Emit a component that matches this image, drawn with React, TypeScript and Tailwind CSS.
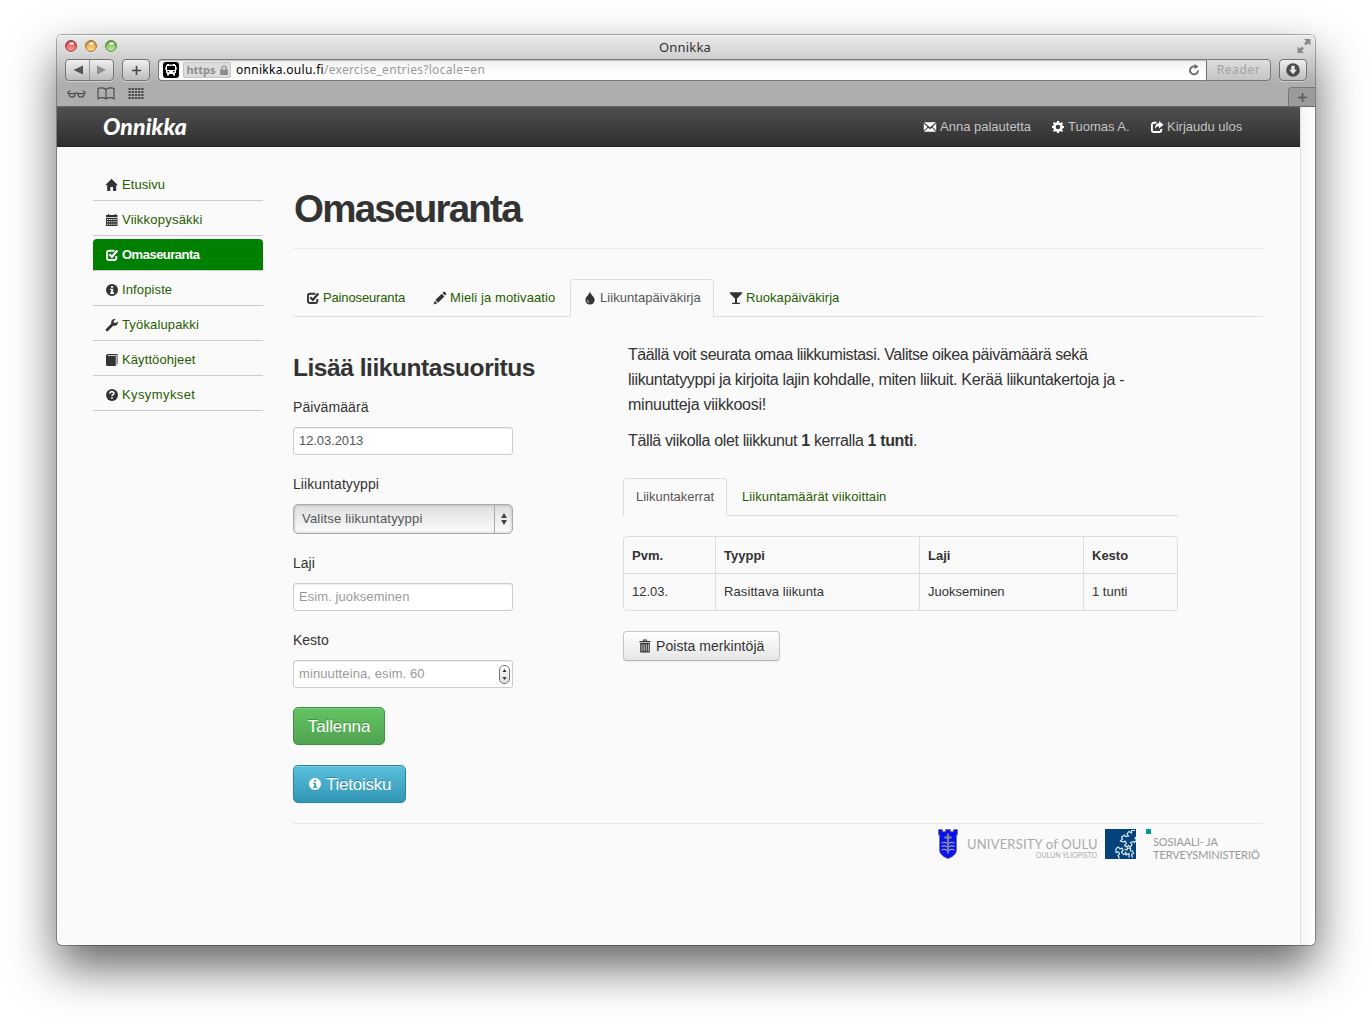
import type { ReactNode } from "react";

type IconName =
  | "home" | "calendar" | "check" | "info" | "wrench" | "book" | "question"
  | "pencil" | "tint" | "glass" | "envelope" | "cog" | "share" | "trash";

const glyphs: Record<IconName, ReactNode> = {
  home: <path d="M6.500 .8 13 7.200H11.200V13H8V9H5.300V13H2.200V7.200H.2Z" />,
  calendar: (
    <path
      fillRule="evenodd"
      d="M1 2h2V1h1.2v1h5.600V1H11v1h1.500v2H1zM1 4.800h11.500V13H1zM2 6v1h1.200V6zm2.100 0v1h1.200V6zm2.100 0v1h1.200V6zm2.100 0v1h1.200V6zm2.100 0v1h1.200V6zM2 8.300v1h1.200v-1zm2.100 0v1h1.200v-1zm2.100 0v1h1.200v-1zm2.100 0v1h1.200v-1zm2.100 0v1h1.200v-1zM2 10.700v1h1.200v-1zm2.100 0v1h1.200v-1zm2.100 0v1h1.200v-1zm2.100 0v1h1.200v-1zm2.100 0v1h1.200v-1z"
    />
  ),
  check: (
    <>
      <path d="M9.500 2.800H4A2.100 2.100 0 0 0 2 4.900v5a2.100 2.100 0 0 0 2 2.100h5.200a2.100 2.100 0 0 0 2.100-2.100V8" fill="none" stroke="currentColor" strokeWidth="1.900" />
      <path d="M4.300 6.200 6.900 8.800 12.400 2.600" fill="none" stroke="currentColor" strokeWidth="2.200" />
    </>
  ),
  info: <path fillRule="evenodd" d="M7 1a6 6 0 1 0 0 12A6 6 0 0 0 7 1zm-1 2h2.200v1.800H6zM5 5.700h3.200v3.800h1V11H5V9.500h1V7H5z" />,
  wrench: <path d="M12.900 3.400 10.600 5 8.800 4.600 8.600 3 10.600 1.200C8.600.5 6.400 1.700 6.200 3.900c-.1.700 0 1.200.2 1.700L1.200 10.800c-.7.800-.5 1.700 0 2.100.5.500 1.400.6 2-.1l5.200-5.200c2.500.8 5-1.300 4.500-4.200z" />,
  book: <path fillRule="evenodd" d="M3 1h9.500v10.500h-.9V2.100H2.900v.7H10.800V13H2.200C1.500 13 1 12.500 1 11.800V3c0-1.200.8-2 2-2z" />,
  question: (
    <>
      <circle cx="7" cy="7" r="6" />
      <path d="M4.900 5.500C4.900 3 9 3.100 9 5.300 9 6.700 7 6.600 7 8.100M7 9.100v1.700" fill="none" stroke="#fafafa" strokeWidth="1.600" />
    </>
  ),
  pencil: <path d="M.6 13.400 1.800 9.700 4.400 12.200zM2.400 9 8.700 2.700l2.700 2.700-6.300 6.300zM9.500 1.900l.9-.9c.9-.9 3.600 1.700 2.700 2.600l-1 1z" />,
  tint: <path fillRule="evenodd" d="M7 .4C7.600 3.400 11.600 5.800 11.600 8.900A4.600 4.600 0 0 1 2.400 8.900C2.400 5.800 6.400 3.400 7 .4zM5 8.200c-1.400 1.600-.2 3.400 1.300 3.300C5.200 10.600 4.900 9.600 5 8.200z" />,
  glass: <path d="M.8 1.200h12.400v1L8 7.700v4.100h3V13H3v-1.200h3V7.700L.8 2.200z" />,
  envelope: <path d="M1 2.300h12L7 7.300zM.8 3.400 4.500 7 .8 10.800zM13.200 3.400 9.500 7l3.700 3.800zM5.200 7.700 7 9.200l1.800-1.500 4.200 4.100H1z" />,
  cog: (
    <path
      fillRule="evenodd"
      d="M6 1h2l.3 1.500 1.100.5 1.300-.9 1.300 1.300-.9 1.300.5 1.100L13 6v2l-1.400.3-.5 1.100.9 1.300-1.300 1.300-1.300-.9-1.100.5L8 13H6l-.3-1.400-1.100-.5-1.300.9L2 10.700l.9-1.300-.5-1.100L1 8V6l1.400-.3.5-1.100L2 3.300 3.300 2l1.300.9 1.100-.5zM7 4.700a2.300 2.300 0 1 0 0 4.600 2.300 2.300 0 0 0 0-4.600z"
    />
  ),
  share: (
    <>
      <path d="M6.500 2.800H4A2.100 2.100 0 0 0 1.900 4.900v5A2.100 2.100 0 0 0 4 12h5.200a2.100 2.100 0 0 0 2.100-2.100V9" fill="none" stroke="currentColor" strokeWidth="1.900" />
      <path d="M9 1l4.500 3.700L9 8.400V6.200C6.800 6.200 6 7 5.200 8.800 4.800 5.200 6.500 3.300 9 3.200z" />
    </>
  ),
  trash: (
    <path
      fillRule="evenodd"
      d="M5 .5h4V2h3.500v1.300h-11V2H5zM6 1.400V2h2v-.6zM2.200 4h9.600v9.500H2.200zM3.600 5.200v7h.8v-7zm2.100 0v7h.8v-7zm2.100 0v7h.8v-7zm2.100 0v7h.8v-7z"
    />
  ),
};

function Icon({ name, className = "" }: { name: IconName; className?: string }) {
  return (
    <svg viewBox="0 0 14 14" fill="currentColor" className={`h-[14px] w-[14px] shrink-0 ${className}`}>
      {glyphs[name]}
    </svg>
  );
}

const sideItems: { icon: IconName; label: string; track: string; active?: boolean }[] = [
  { icon: "home", label: "Etusivu", track: "tracking-[0.050px]" },
  { icon: "calendar", label: "Viikkopysäkki", track: "tracking-[0.220px]" },
  { icon: "check", label: "Omaseuranta", track: "tracking-[-0.500px]", active: true },
  { icon: "info", label: "Infopiste", track: "tracking-[0.120px]" },
  { icon: "wrench", label: "Työkalupakki", track: "tracking-[0.150px]" },
  { icon: "book", label: "Käyttöohjeet", track: "tracking-[0.100px]" },
  { icon: "question", label: "Kysymykset", track: "tracking-[0.400px]" },
];

const mainTabs: { icon: IconName; label: string; box: string; active?: boolean }[] = [
  { icon: "check", label: "Painoseuranta", box: "w-[127px] tracking-[-0.140px]" },
  { icon: "pencil", label: "Mieli ja motivaatio", box: "w-[150px] tracking-[0.110px]" },
  { icon: "tint", label: "Liikuntapäiväkirja", box: "w-[144px] tracking-[0.060px]", active: true },
  { icon: "glass", label: "Ruokapäiväkirja", box: "w-[140px] ml-[2px] tracking-[0.060px]" },
];

function Light({ tone }: { tone: string }) {
  return (
    <span className={`relative block h-3 w-3 rounded-full border shadow-[inset_0_1px_2px_rgba(0,0,0,0.35),0_1px_0_rgba(255,255,255,0.5)] ${tone}`}>
      <span className="absolute left-[2.500px] top-[0.500px] h-[3px] w-[5px] rounded-full bg-white/70" />
    </span>
  );
}

const chromeButton =
  "flex h-[22px] items-center justify-center rounded-[4px] border border-[#747474] bg-linear-to-b from-[#efefef] to-[#bdbdbd] shadow-[0_1px_0_rgba(255,255,255,0.4)]";

function BrowserChrome() {
  return (
    <div className="h-[72px] rounded-t-[5px] border-b border-[#6b6b6b] bg-linear-to-b from-[#ebebeb] from-0% via-[#cfcfcf] via-33% to-[#aeaeae] to-68% font-['Noto_Sans',sans-serif] shadow-[inset_0_1px_0_#f5f5f5]">
      <div className="grid h-6 grid-cols-[1fr_auto_1fr] items-center px-2">
        <div className="mt-[-2px] flex gap-2">
          <Light tone="border-[#a33a3c] bg-linear-to-b from-[#d8484b] to-[#ff9a97]" />
          <Light tone="border-[#a97430] bg-linear-to-b from-[#e39a3c] to-[#ffe08a]" />
          <Light tone="border-[#5a8a42] bg-linear-to-b from-[#6fb04e] to-[#c5ee9c]" />
        </div>
        <div className="ml-[-2px] text-[13px] leading-5 tracking-[0.200px] text-[#333]">Onnikka</div>
        <svg viewBox="0 0 14 14" className="mr-[-4px] mt-[-2px] h-[14px] w-[14px] justify-self-end" fill="#888">
          <path d="M13.500 0v6.500L11.300 4.300 9 6.600 7 4.600l2.300-2.300L7 0zM.5 14V7.500l2.200 2.200L5 7.400l2 2-2.300 2.300L7 14z" />
        </svg>
      </div>
      <div className="flex h-[22px] pl-2 pr-[8px]">
        <div className={`${chromeButton} w-[49px]`}>
          <svg viewBox="0 0 47 20" className="h-5 w-[47px]">
            <path d="M17 5.500v9L7.500 10z" fill="#555" />
            <path d="M31 5.500v9l9-4.500z" fill="#8f8f8f" />
            <path d="M23.500 0v20" stroke="#999" />
          </svg>
        </div>
        <div className={`${chromeButton} ml-2 w-7`}>
          <svg viewBox="0 0 12 12" className="h-[11px] w-[11px]" stroke="#444" strokeWidth="1.800">
            <path d="M6 1v10M1 6h10" />
          </svg>
        </div>
        <div className="ml-2 flex h-[22px] flex-1 items-center rounded-l-[4px] border border-r-0 border-[#777] bg-linear-to-b from-[#f0f0f0] to-white to-70% pl-[4px] text-[12px] shadow-[inset_0_1px_1px_rgba(0,0,0,0.2)]">
          <svg viewBox="0 0 16 16" className="h-4 w-4 shrink-0">
            <rect width="16" height="16" rx="3" fill="#000" />
            <path fillRule="evenodd" fill="#fff" d="M4 2h8v1h1v8h-1v2.500h-2V12H6v1.500H4V11H3V3h1zm0 2v4h8V4zm.5 5v1.200h1.500V9zM10 9v1.200h1.500V9zM6 2.600v.6h4v-.6zM2 5h.7v3H2zm11.300 0h.7v3h-.7z" />
          </svg>
          <span className="ml-1 flex h-4 w-[48px] items-center justify-center gap-1 rounded-[2px] border border-[#c4c4c4] bg-[#dcdcdc] text-[11px] font-bold leading-3 text-[#8d8d8d]">
            <span>https</span>
            <svg viewBox="0 0 9 11" className="h-[10px] w-[8px]" fill="#8d8d8d">
              <rect y="5" width="9" height="6" rx="1" />
              <path d="M2 5.500V3.500a2.500 2.500 0 0 1 5 0v2" fill="none" stroke="#8d8d8d" strokeWidth="1.400" />
            </svg>
          </span>
          <span className="ml-[5px] whitespace-nowrap tracking-[0.290px] text-black">
            onnikka.oulu.fi<span className="text-[#999]">/exercise_entries?locale=en</span>
          </span>
          <svg viewBox="0 0 12 12" className="ml-auto mr-[6px] h-3 w-3" fill="none" stroke="#666" strokeWidth="1.900">
            <path d="M10 6.500a4 4 0 1 1-3-4" />
            <path d="M6.500 0 10.500 2.700 6.500 5z" fill="#666" stroke="none" />
          </svg>
        </div>
        <div className="flex h-[22px] w-[65px] items-center justify-center rounded-r-[4px] border border-[#777] bg-linear-to-b from-[#dedede] to-[#c4c4c4] text-[12px] tracking-[0.600px] text-[#a3a3a3]">Reader</div>
        <div className={`${chromeButton} ml-2 w-7`}>
          <svg viewBox="0 0 14 14" className="h-[14px] w-[14px]">
            <circle cx="7" cy="7" r="6.800" fill="#4a4a4a" />
            <path d="M5.300 2.800h3.400v4h2.200L7 11.300 3.100 6.800h2.200z" fill="#e6e6e6" />
          </svg>
        </div>
      </div>
      <div className="flex h-[25px] items-center pl-[10px] text-[#4b4b4b]">
        <svg viewBox="0 0 20 10" className="h-[10px] w-[19px]" fill="none" stroke="currentColor" strokeWidth="1.300">
          <path d="M8.500 4.500c0 5-6.500 5-6.500 0h6.500c0-1 3-1 3 0H18c0 5-6.500 5-6.500 0M2 4.500 .5 3.500 3.500 1.500M18 4.500l1.500-1-3-2" />
        </svg>
        <svg viewBox="0 0 18 13" className="ml-[11px] h-[13px] w-[18px]" fill="none" stroke="currentColor" strokeWidth="1.200">
          <path d="M9 2.500C7 .5 3 .5 1 1.500V11.800c2.500-1.300 6-1.300 8 .2 2-1.500 5.500-1.500 8-.2V1.500C15 .5 11 .5 9 2.500zV12" />
        </svg>
        <svg viewBox="0 0 16 12" className="ml-[13px] h-3 w-4" fill="currentColor">
          {[0, 3, 6, 9].map((y) =>
            [0.500, 3.700, 6.900, 10.100, 13.300].map((x) => <rect key={`${x}-${y}`} x={x} y={y} width="2.300" height="2" />),
          )}
        </svg>
        <div className="ml-auto mt-[6px] flex h-[19px] w-[27px] items-center justify-center rounded-tl-[4px] border-l border-t border-[#777] bg-[#9b9b9b]">
          <svg viewBox="0 0 10 10" className="h-[9px] w-[9px]" stroke="#555" strokeWidth="1.800">
            <path d="M5 0v10M0 5h10" />
          </svg>
        </div>
      </div>
    </div>
  );
}

function SiteNav() {
  return (
    <div className="flex h-10 items-center bg-linear-to-b from-[#505050] to-[#2e2e2e] pl-[46px] text-[13px] text-[#c3c3c3] shadow-[inset_0_-1px_0_#252525]">
      <div className="mt-[-2px] w-[820px] font-['Lato',sans-serif] text-[23px] font-black italic leading-8 tracking-[0.100px] text-white">Onnikka</div>
      <div className="flex w-[128px] items-center gap-[3px] whitespace-nowrap"><Icon name="envelope" className="text-white" />Anna palautetta</div>
      <div className="flex w-[99px] items-center gap-[3px] whitespace-nowrap"><Icon name="cog" className="text-white" />Tuomas A.</div>
      <div className="flex items-center gap-[3px] whitespace-nowrap"><Icon name="share" className="text-white" />Kirjaudu ulos</div>
    </div>
  );
}

function Sidebar() {
  return (
    <ul className="mt-[19px] w-[170px]">
      {sideItems.map((s) => (
        <li key={s.label} className="mt-[3px] h-8 border-b border-[#ccc]">
          <a className={`flex h-[31px] items-center gap-[3px] pl-3 text-[13px] ${s.active ? "rounded-t-[4px] bg-[#008000] font-bold text-white" : "text-[#265c00]"}`}>
            <Icon name={s.icon} className={s.active ? "text-white" : "text-[#333]"} />
            <span className={s.track}>{s.label}</span>
          </a>
        </li>
      ))}
    </ul>
  );
}

const field =
  "flex h-7 w-[220px] items-center rounded-[3px] border border-[#ccc] bg-white px-[5px] text-[13px] shadow-[inset_0_1px_1px_rgba(0,0,0,0.075)]";

function EntryForm() {
  return (
    <div className="flex w-[330px] flex-col items-start pt-[31px] text-[14px] leading-5">
      <h3 className="h-10 whitespace-nowrap text-[24.500px] font-bold leading-10 tracking-[-0.450px]">Lisää liikuntasuoritus</h3>
      <label className="mt-[9px] tracking-[0.080px]">Päivämäärä</label>
      <div className={`${field} mt-[10px] tracking-[-0.080px] text-[#555]`}>12.03.2013</div>
      <label className="mt-[19px] tracking-[0.080px]">Liikuntatyyppi</label>
      <div className="mt-[10px] flex h-[30px] w-[220px] items-center rounded-[5px] border border-[#aaa] bg-linear-to-b from-[#dedede] to-[#fcfcfc] pl-2 text-[13px] tracking-[0.200px] text-[#555] shadow-[inset_0_0_3px_rgba(0,0,0,0.250)]">
        Valitse liikuntatyyppi
        <span className="ml-auto flex h-full w-[18px] items-center justify-center border-l border-[#aaa]">
          <svg viewBox="0 0 6 12" className="h-3 w-[6px]" fill="#444"><path d="M3 0l3 5H0zM3 12 0 7h6z" /></svg>
        </span>
      </div>
      <label className="mt-[19px]">Laji</label>
      <div className={`${field} mt-[10px] tracking-[0.080px] text-[#999]`}>Esim. juokseminen</div>
      <label className="mt-[19px]">Kesto</label>
      <div className={`${field} mt-[10px] pr-[2px] tracking-[0.100px] text-[#999]`}>
        minuutteina, esim. 60
        <span className="ml-auto flex h-[19px] w-[11px] items-center justify-center rounded-[5px] border border-[#777] bg-linear-to-b from-white to-[#ddd]">
          <svg viewBox="0 0 5 11" className="h-[11px] w-[5px]" fill="#333"><path d="M2.500 0 4.500 3h-4zM2.500 11l-2-3h4z" /></svg>
        </span>
      </div>
      <button className="mt-[19px] h-[38px] w-[92px] rounded-[5px] border border-[#3f8f3f] bg-linear-to-b from-[#62c462] to-[#51a351] pt-[2px] text-[17px] tracking-[-0.100px] text-white [text-shadow:0_-1px_0_rgba(0,0,0,0.250)] shadow-[inset_0_1px_0_rgba(255,255,255,0.2),0_1px_2px_rgba(0,0,0,0.05)]">Tallenna</button>
      <button className="mt-5 flex h-[38px] w-[113px] items-center gap-1 rounded-[5px] border border-[#2c85a0] bg-linear-to-b from-[#5bc0de] to-[#2f96b4] pl-[14px] text-[17px] tracking-[-0.250px] text-white [text-shadow:0_-1px_0_rgba(0,0,0,0.250)] shadow-[inset_0_1px_0_rgba(255,255,255,0.2),0_1px_2px_rgba(0,0,0,0.05)]">
        <Icon name="info" /><span className="pt-[2px]">Tietoisku</span>
      </button>
    </div>
  );
}

function Entries() {
  const th = "border-l border-[#ddd] first:border-l-0 pl-2 pt-[2px] text-left font-bold";
  const td = "border-l border-t border-[#ddd] first:border-l-0 pl-2";
  return (
    <div className="w-[555px] pt-[25px] text-[13px]">
      <div className="pl-[5px] text-[16px] leading-[25px]">
        <p className="whitespace-nowrap tracking-[-0.440px]">Täällä voit seurata omaa liikkumistasi. Valitse oikea päivämäärä sekä</p>
        <p className="whitespace-nowrap tracking-[-0.340px]">liikuntatyyppi ja kirjoita lajin kohdalle, miten liikuit. Kerää liikuntakertoja ja -</p>
        <p className="whitespace-nowrap tracking-[-0.250px]">minuutteja viikkoosi!</p>
        <p className="mt-[11px] whitespace-nowrap tracking-[-0.360px]">Tällä viikolla olet liikkunut <b>1</b> kerralla <b>1 tunti</b>.</p>
      </div>
      <div className="mt-[25px] flex h-[38px] border-b border-[#ddd]">
        <span className="mb-[-1px] flex w-[104px] items-center justify-center whitespace-nowrap rounded-t-[4px] border border-b-0 border-[#ddd] bg-[#fafafa] pb-[2px] text-[#555]">Liikuntakerrat</span>
        <span className="flex items-center whitespace-nowrap pl-[15px] tracking-[0.080px] text-[#265c00]">Liikuntamäärät viikoittain</span>
      </div>
      <div className="mt-5 overflow-hidden rounded-[4px] border border-[#ddd]">
        <table className="w-full table-fixed border-separate border-spacing-0">
          <colgroup>
            <col className="w-[91px]" /><col className="w-[204px]" /><col className="w-[164px]" /><col />
          </colgroup>
          <thead>
            <tr className="h-9"><th className={th}>Pvm.</th><th className={th}>Tyyppi</th><th className={th}>Laji</th><th className={th}>Kesto</th></tr>
          </thead>
          <tbody>
            <tr className="h-[37px] bg-[#f9f9f9]"><td className={td}>12.03.</td><td className={`${td} tracking-[0.100px]`}>Rasittava liikunta</td><td className={td}>Juokseminen</td><td className={td}>1 tunti</td></tr>
          </tbody>
        </table>
      </div>
      <button className="mt-5 flex h-[30px] w-[157px] items-center gap-1 whitespace-nowrap rounded-[4px] border border-[#c5c5c5] border-b-[#b3b3b3] bg-linear-to-b from-white to-[#e6e6e6] pl-[14px] text-[14px] tracking-[0.060px] shadow-[0_1px_2px_rgba(0,0,0,0.05)]">
        <Icon name="trash" />Poista merkintöjä
      </button>
    </div>
  );
}

function Partners() {
  return (
    <div className="flex items-start pl-[644px] pt-[5px] font-['Lato',sans-serif]">
      <svg viewBox="0 0 22 30" className="h-[30px] w-[22px]">
        <path d="M1.500 .5h4v2h3v-2h5v2h3v-2h4v5.500h-1V21c0 4-4.500 7.500-8.500 8.500C7 28.500 2.500 25 2.500 21V6h-1z" fill="#0a12f0" stroke="#777" strokeWidth=".9" />
        <path d="M11 4.500v20M7.500 8.500h7" stroke="#8a8f88" strokeWidth="1.800" />
        <path d="M4.500 14c2-1 4-.8 5.500.3M12 14.300c1.500-1.100 3.500-1.300 5.500-.3M4.500 17.500c2-1 4-.8 5.500.3M12 17.800c1.500-1.100 3.500-1.300 5.500-.3M4.500 21c2-1 4-.8 5.500.3M12 21.300c1.500-1.100 3.500-1.300 5.500-.3" fill="none" stroke="#9aa2b8" strokeWidth="1.300" />
      </svg>
      <div className="ml-[8px] w-[130px] whitespace-nowrap pt-[8px] text-right text-[#aaa]">
        <div className="text-[13px] leading-[14px] tracking-[0.180px]">UNIVERSITY of OULU</div>
        <div className="text-[7px] leading-[8px]">OULUN YLIOPISTO</div>
      </div>
      <svg viewBox="0 0 31 30" className="ml-2 h-[30px] w-[31px]">
        <path d="M0 0h31v30H0z" fill="#04427c" />
        <path
          d="M30 1.500h-3.500v2.500l-2.500-1.500-2 2.500 1.500 2-3 .5-1-1.500-3 2 1 2-2 2 3 1 1.500-1 1.500 2.500-2 2 2 1.500 2-1.500 2 1.500 1.500-2.500-1.500-2 3-1 1 1 2-2.500-1.500-2 2-1.500M11 19.500l2.500-1.500 1.500 2 2-1 1 2.500-1.500 1.500 2 2.500 2-1 1 2M11 19.500v4l2.500-.5 1 2-1.500 1.500 1.500 3M19.500 20l2.500 1 .5-2 3 .5v2.500h2l1 2.500-2 1 1 3M20 22.500l2 3 2-1v4"
          fill="none"
          stroke="#dce8f2"
          strokeWidth="1.200"
        />
      </svg>
      <div className="ml-[10px] h-[5px] w-[5px] bg-[#009a9a]" />
      <div className="ml-[2px] whitespace-nowrap pt-[7px] text-[11px] leading-[12.500px] tracking-[-0.100px] text-[#999]">
        <div>SOSIAALI- JA</div>
        <div>TERVEYSMINISTERIÖ</div>
      </div>
    </div>
  );
}

export default function App() {
  return (
    <div className="h-[1024px] w-[1372px] overflow-hidden bg-white pl-[57px] pt-[35px] font-['Liberation_Sans',Arial,sans-serif] text-[#333]">
      <div className="h-[910px] w-[1258px] rounded-[5px] bg-[#fafafa] shadow-[0_0_0_1px_rgba(0,0,0,0.300),0_22px_48px_rgba(0,0,0,0.620)]">
        <BrowserChrome />
        <div className="flex h-[838px]">
          <div className="w-[1243px]">
            <SiteNav />
            <div className="flex pl-9">
              <Sidebar />
              <main className="ml-[30px] w-[970px] pt-[42px]">
                <h1 className="h-[60px] border-b border-[#eaeaea] pl-px text-[38.500px] font-bold leading-10 tracking-[-1.750px]">Omaseuranta</h1>
                <div className="mt-[30px] flex h-[38px] border-b border-[#ddd] text-[13px]">
                  {mainTabs.map((t) => (
                    <div
                      key={t.label}
                      className={`flex items-center gap-[3px] whitespace-nowrap border border-b-0 pl-3 ${t.box} ${t.active ? "mb-[-1px] rounded-t-[4px] border-[#ddd] bg-[#fafafa] pb-[2px] text-[#555]" : "border-transparent text-[#265c00]"}`}
                    >
                      <Icon name={t.icon} className="text-[#333]" />
                      {t.label}
                    </div>
                  ))}
                </div>
                <div className="flex h-[507px] border-b border-[#e8e8e8]">
                  <EntryForm />
                  <Entries />
                </div>
                <Partners />
              </main>
            </div>
          </div>
          <div className="w-[15px] rounded-br-[5px] border-l border-[#e0e0e0] bg-linear-to-r from-[#f4f4f4] to-white" />
        </div>
      </div>
    </div>
  );
}
